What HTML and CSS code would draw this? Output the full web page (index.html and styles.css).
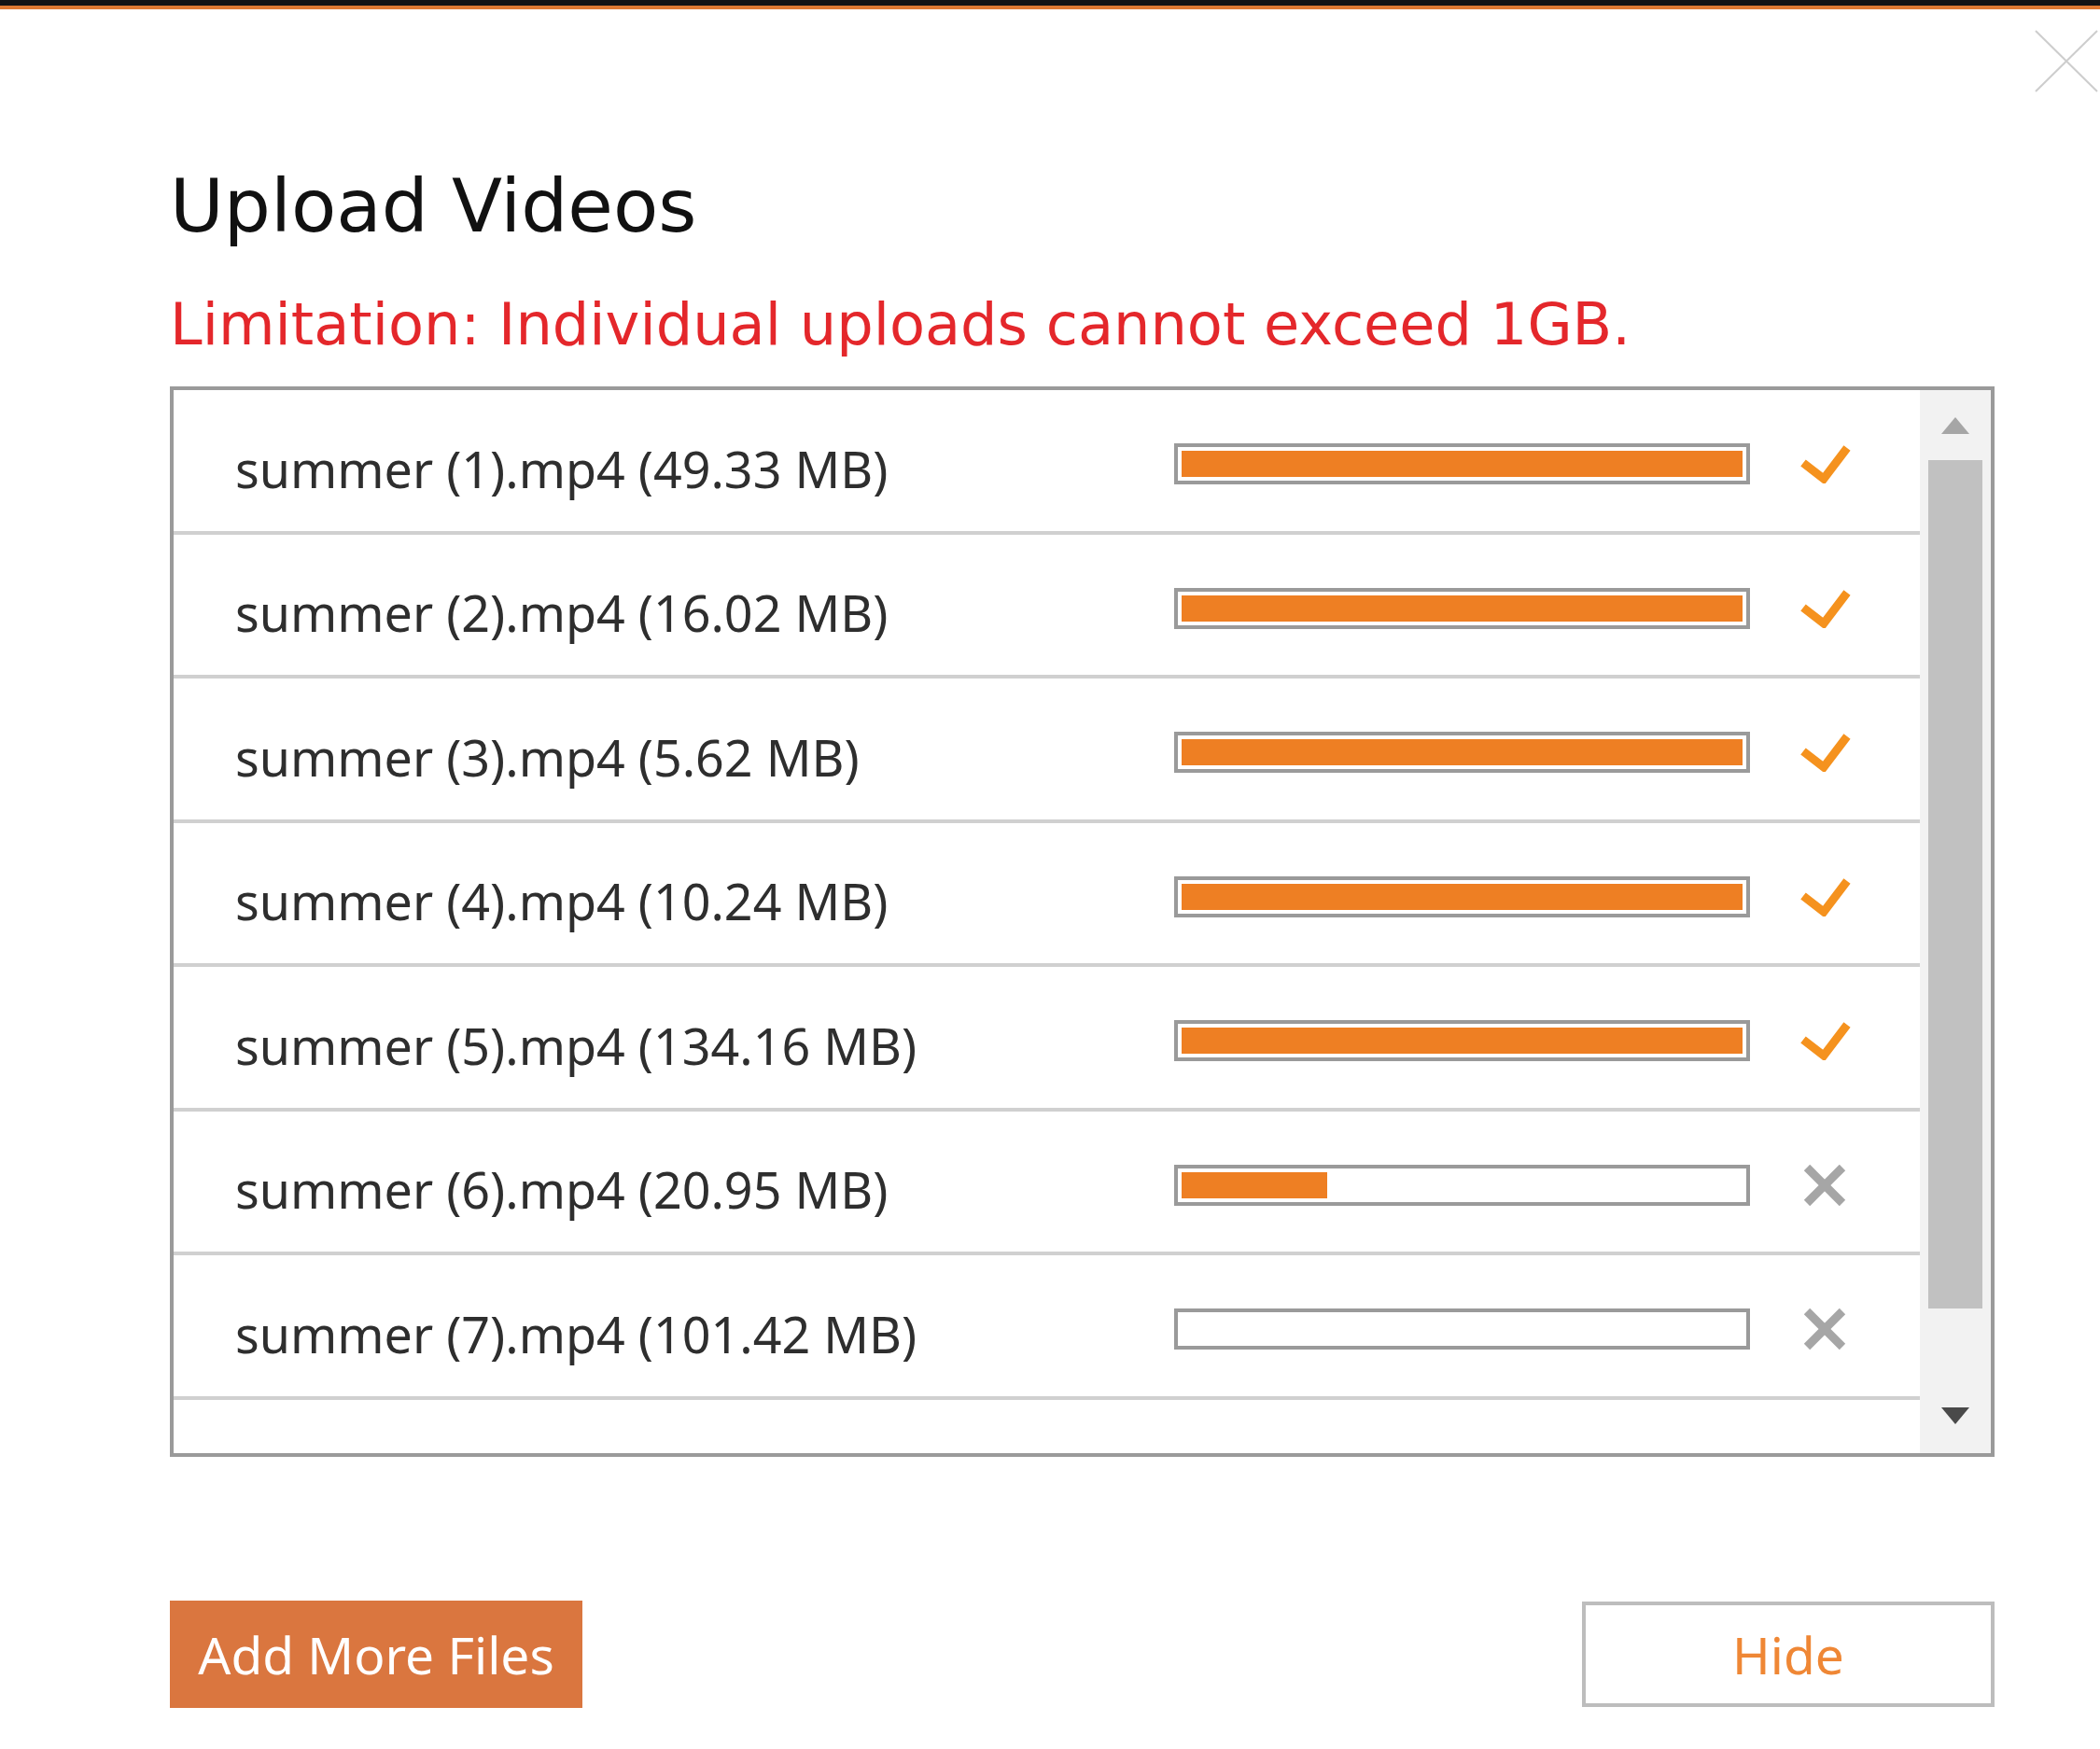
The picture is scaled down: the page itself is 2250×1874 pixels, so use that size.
FILE: index.html
```html
<!DOCTYPE html>
<html lang="en">
<head>
    <meta charset="UTF-8">
    <meta name="viewport" content="width=device-width, initial-scale=1.0">
    <title>Upload Videos</title>
    <link rel="stylesheet" href="styles.css">
</head>
<body>
    <div class="topbar"></div>

    <div class="dialog">
        <button class="close" title="Close">
            <svg width="68" height="67" viewBox="0 0 68 67">
                <line x1="1" y1="1" x2="67" y2="66" />
                <line x1="67" y1="1" x2="1" y2="66" />
            </svg>
        </button>

        <h1>Upload Videos</h1>
        <p class="limit">Limitation: Individual uploads cannot exceed 1GB.</p>

        <div class="list">
            <div class="rows">
                <div class="row">
                    <span class="name">summer (1).mp4 (49.33 MB)</span>
                    <div class="bar"><div class="fill" style="width: 100%"></div></div>
                    <span class="status done">
                        <svg width="56" height="42" viewBox="0 0 56 42"><polyline points="5,20 27,37 52,4" /></svg>
                    </span>
                </div>
                <div class="row">
                    <span class="name">summer (2).mp4 (16.02 MB)</span>
                    <div class="bar"><div class="fill" style="width: 100%"></div></div>
                    <span class="status done">
                        <svg width="56" height="42" viewBox="0 0 56 42"><polyline points="5,20 27,37 52,4" /></svg>
                    </span>
                </div>
                <div class="row">
                    <span class="name">summer (3).mp4 (5.62 MB)</span>
                    <div class="bar"><div class="fill" style="width: 100%"></div></div>
                    <span class="status done">
                        <svg width="56" height="42" viewBox="0 0 56 42"><polyline points="5,20 27,37 52,4" /></svg>
                    </span>
                </div>
                <div class="row">
                    <span class="name">summer (4).mp4 (10.24 MB)</span>
                    <div class="bar"><div class="fill" style="width: 100%"></div></div>
                    <span class="status done">
                        <svg width="56" height="42" viewBox="0 0 56 42"><polyline points="5,20 27,37 52,4" /></svg>
                    </span>
                </div>
                <div class="row">
                    <span class="name">summer (5).mp4 (134.16 MB)</span>
                    <div class="bar"><div class="fill" style="width: 100%"></div></div>
                    <span class="status done">
                        <svg width="56" height="42" viewBox="0 0 56 42"><polyline points="5,20 27,37 52,4" /></svg>
                    </span>
                </div>
                <div class="row">
                    <span class="name">summer (6).mp4 (20.95 MB)</span>
                    <div class="bar"><div class="fill" style="width: 26%"></div></div>
                    <span class="status cancel">
                        <svg width="46" height="46" viewBox="0 0 46 46"><line x1="4" y1="4" x2="42" y2="42" /><line x1="42" y1="4" x2="4" y2="42" /></svg>
                    </span>
                </div>
                <div class="row">
                    <span class="name">summer (7).mp4 (101.42 MB)</span>
                    <div class="bar"><div class="fill" style="width: 0%"></div></div>
                    <span class="status cancel">
                        <svg width="46" height="46" viewBox="0 0 46 46"><line x1="4" y1="4" x2="42" y2="42" /><line x1="42" y1="4" x2="4" y2="42" /></svg>
                    </span>
                </div>
            </div>

            <div class="scrollbar">
                <div class="arrow"><span class="tri up"></span></div>
                <div class="thumb"></div>
                <div class="track"></div>
                <div class="arrow down-area"><span class="tri down"></span></div>
            </div>
        </div>

        <div class="footer">
            <button class="btn-add">Add More Files</button>
            <button class="btn-hide">Hide</button>
        </div>
    </div>
</body>
</html>
```
FILE: styles.css
```css
body {
    margin: 0;
    background: #fff;
    font-family: "Noto Sans", "Open Sans", sans-serif;
    color: #333;
}
.topbar {
    height: 6px;
    background: #141414;
    border-bottom: 4px solid #df7a32;
}
.dialog {
    position: relative;
    width: 1955px;
    padding: 172px 0 0 182px;
}
.close {
    position: absolute;
    top: 22px;
    left: 2180px;
    padding: 0;
    border: none;
    background: none;
    cursor: pointer;
}
.close svg line {
    stroke: #cdcdcd;
    stroke-width: 2;
}
h1 {
    margin: 0;
    font-family: "DejaVu Sans", sans-serif;
    font-weight: normal;
    font-size: 79px;
    line-height: 1;
    color: #111;
}
.limit {
    margin: 56px 0 0;
    font-family: "DejaVu Sans", sans-serif;
    font-size: 62.2px;
    line-height: 1;
    color: #e4272b;
}

/* file list */
.list {
    display: flex;
    margin-top: 35px;
    height: 1147px;
    box-sizing: border-box;
    border: 4px solid #9a9a9a;
    overflow: hidden;
}
.rows {
    flex: 1;
}
.row {
    display: flex;
    align-items: center;
    height: 150.5px;
    padding-left: 66px;
    border-bottom: 4px solid #d0d0d0;
}
.name {
    flex: 1;
    padding-top: 18px;
    font-size: 53.8px;
    line-height: 1;
    color: #2e2e2e;
    white-space: nowrap;
}
.bar {
    width: 617px;
    height: 44px;
    margin-top: 8px;
    padding: 4px;
    box-sizing: border-box;
    border: 4px solid #9a9a9a;
    background: #fff;
}
.fill {
    height: 28px;
    background: #ee7f23;
}
.status {
    display: flex;
    justify-content: center;
    width: 60px;
    margin: 8px 72px 0 50px;
}
.done svg polyline {
    fill: none;
    stroke: #f5921e;
    stroke-width: 9;
    stroke-linejoin: miter;
}
.cancel svg line {
    stroke: #a6a6a6;
    stroke-width: 9;
}

/* scrollbar */
.scrollbar {
    display: flex;
    flex-direction: column;
    width: 76px;
    background: #f2f2f2;
}
.arrow {
    display: flex;
    align-items: center;
    justify-content: center;
    height: 75px;
}
.down-area {
    height: 80px;
}
.tri {
    width: 0;
    height: 0;
    border-left: 15px solid transparent;
    border-right: 15px solid transparent;
}
.tri.up {
    border-bottom: 18px solid #a6a6a6;
}
.tri.down {
    border-top: 18px solid #4a4a4a;
}
.thumb {
    height: 909px;
    margin: 0 9px;
    background: #c1c1c1;
}
.track {
    flex: 1;
}

/* buttons */
.footer {
    display: flex;
    justify-content: space-between;
    align-items: flex-start;
    margin-top: 154px;
}
.footer button {
    display: flex;
    align-items: center;
    justify-content: center;
    width: 442px;
    font-family: "Noto Sans", "Open Sans", sans-serif;
    font-size: 55px;
    line-height: 1;
    cursor: pointer;
}
.btn-add {
    height: 115px;
    border: none;
    background: #da763f;
    color: #fff;
}
.btn-hide {
    height: 113px;
    margin-top: 1px;
    border: 4px solid #bdbdbd;
    background: #fff;
    color: #ef8735;
}
```
